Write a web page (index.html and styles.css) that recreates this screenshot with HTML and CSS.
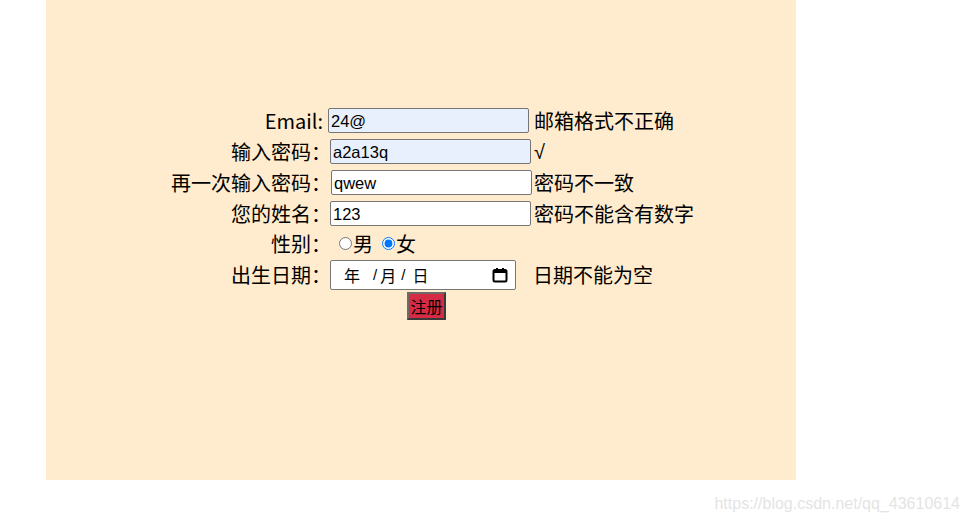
FILE: index.html
```html
<!DOCTYPE html>
<html lang="zh">
<head>
<meta charset="utf-8">
<link rel="stylesheet" href="styles.css">
</head>
<body>
<div class="panel">
  <form class="form">
    <div class="lbl lbl-en r1">Email:</div>
    <div class="cell r1"><input class="field auto" type="text" value="24@" style="margin-left:1px"></div>
    <div class="msg r1">邮箱格式不正确</div>

    <div class="lbl r2">输入密码<span class="colon">：</span></div>
    <div class="cell r2"><input class="field auto" type="text" value="a2a13q" style="margin-left:3px"></div>
    <div class="msg r2"><span class="check">√</span></div>

    <div class="lbl r3">再一次输入密码<span class="colon">：</span></div>
    <div class="cell r3"><input class="field" type="text" value="qwew" style="margin-left:4px"></div>
    <div class="msg r3">密码不一致</div>

    <div class="lbl r4">您的姓名<span class="colon">：</span></div>
    <div class="cell r4"><input class="field" type="text" value="123" style="margin-left:3px"></div>
    <div class="msg r4">密码不能含有数字</div>

    <div class="lbl r5">性别<span class="colon">：</span></div>
    <div class="cell r5 radios">
      <label class="opt"><input type="radio" name="sex">男</label>
      <label class="opt"><input type="radio" name="sex" checked>女</label>
    </div>
    <div class="msg r5"></div>

    <div class="lbl r6">出生日期<span class="colon">：</span></div>
    <div class="cell r6">
      <div class="date">
        <span class="date-text"><span class="seg-y">年</span><span class="sep sep1">/</span><span class="seg-m">月</span><span class="sep sep2">/</span><span class="seg-d">日</span></span>
        <svg class="cal" width="16" height="16" viewBox="0 0 16 16"><rect x="1.5" y="3" width="13" height="11.5" rx="1.5" fill="none" stroke="#000" stroke-width="2"/><rect x="1.5" y="3" width="13" height="3" fill="#000"/><rect x="4" y="1" width="2" height="3" fill="#000"/><rect x="10" y="1" width="2" height="3" fill="#000"/></svg>
      </div>
    </div>
    <div class="msg r6 datemsg">日期不能为空</div>

    <div class="cell r7 btncell"><button type="button" class="submit">注册</button></div>
  </form>
</div>
<div class="watermark">https://blog.csdn.net/qq_43610614</div>
</body>
</html>
```

FILE: styles.css
```css
html, body {
  margin: 0;
  padding: 0;
  background: #ffffff;
}
body {
  font-family: "Noto Sans CJK SC", "Noto Sans", sans-serif;
  font-size: 20px;
  color: #000;
}
.panel {
  width: 750px;
  height: 480px;
  margin-left: 46px;
  background: #ffebcd;
  box-sizing: border-box;
  padding-top: 105px;
}
.form {
  display: grid;
  grid-template-columns: 171px 200px auto;
  grid-template-rows: 31px 31px 31px 31px 29px 33px 31px;
  margin-left: 114px;
  align-items: center;
}
.lbl {
  text-align: right;
  line-height: 24px;
  white-space: nowrap;
  grid-column: 1;
}
.lbl-en {
  padding-right: 8px;
}
.colon {
  font-family: "Noto Sans CJK JP", sans-serif;
}
.cell {
  grid-column: 2;
  display: flex;
  align-items: center;
  margin-left: -4px;
}
.msg {
  grid-column: 3;
  line-height: 24px;
  padding-left: 3px;
  white-space: nowrap;
}
.check {
  font-family: "Liberation Sans", sans-serif;
  font-size: 20px;
}
.field {
  width: 201px;
  height: 25px;
  box-sizing: border-box;
  border: 1px solid #767676;
  border-radius: 2px;
  padding: 1px 2px 0;
  margin: 0;
  font-family: "Liberation Sans", Arial, sans-serif;
  font-size: 16.5px;
  color: #000;
  background: #fff;
  outline: none;
}
.field.auto {
  background: #e8f0fe;
}
.radios {
  padding-left: 9px;
  font-size: 20px;
  line-height: 24px;
}
.opt {
  display: inline-flex;
  align-items: center;
  margin-right: 6px;
}
.opt input {
  width: 13px;
  height: 13px;
  margin: 0 1px 0 3px;
}
.date {
  margin-left: 3px;
  width: 186px;
  height: 30px;
  box-sizing: border-box;
  border: 1px solid #767676;
  border-radius: 2px;
  background: #fff;
  display: flex;
  align-items: center;
  justify-content: space-between;
  padding: 0 7px 0 13px;
  font-size: 16px;
}
.date-text {
  display: flex;
  align-items: center;
  line-height: 20px;
}
.seg-y {
  margin-right: 13px;
}
.sep {
  font-family: "Liberation Sans", sans-serif;
  font-size: 15px;
}
.sep1 {
  margin-right: 3px;
}
.seg-m {
  margin-right: 5px;
}
.sep2 {
  margin-right: 7px;
}
.cal {
  display: block;
}
.datemsg {
  padding-left: 2px;
}
.btncell {
  grid-column: 2;
  align-self: start;
  padding-top: 1px;
}
.submit {
  margin-left: 80px;
  width: 39px;
  height: 28px;
  padding: 0;
  box-sizing: border-box;
  background: #d62b45;
  border: 2px solid #3a3a3a;
  border-top-color: #6b6b6b;
  border-left-color: #6b6b6b;
  font-family: "Noto Sans CJK SC", sans-serif;
  font-size: 16px;
  line-height: 22px;
  color: #000;
}
.watermark {
  text-align: right;
  padding: 15px 11px 0 0;
  font-family: "Liberation Sans", Arial, sans-serif;
  font-size: 16px;
  color: #e4e4e4;
  line-height: 18px;
}
```
